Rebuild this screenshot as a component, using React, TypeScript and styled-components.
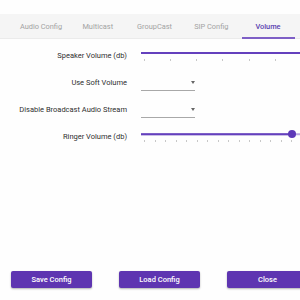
import React from 'react';
import styled, { createGlobalStyle } from 'styled-components';

const Global = createGlobalStyle`
  html, body { margin: 0; padding: 0; overflow: hidden; background: #ffffff; }
  body { font-family: Roboto, "Liberation Sans", sans-serif; }
  * { box-sizing: border-box; }
`;

const Page = styled.div`
  width: 300px;
  height: 300px;
  overflow: hidden;
  display: flex;
  flex-direction: column;
  background: #fefefe;
`;

const TabBar = styled.div`
  flex-shrink: 0;
  width: 320px;
  margin-top: 14px;
  height: 25px;
  background: #f5f5f5;
  border-bottom: 1px solid #ebebeb;
  display: flex;
  align-items: stretch;
  padding-left: 14.5px;
  gap: 3.75px;
`;

const Tab = styled.div<{ $active?: boolean }>`
  position: relative;
  width: 53px;
  flex-shrink: 0;
  display: flex;
  align-items: center;
  justify-content: center;
  font-size: 7.4px;
  white-space: nowrap;
  color: ${p => (p.$active ? '#5b3fb0' : '#a3a3a3')};
  font-weight: ${p => (p.$active ? 500 : 400)};
  &::after {
    content: '';
    display: ${p => (p.$active ? 'block' : 'none')};
    position: absolute;
    left: 0;
    right: 0;
    bottom: -1px;
    height: 2px;
    background: #7e5fc6;
  }
`;

const Form = styled.div`
  width: 320px;
  margin-top: 3px;
  display: grid;
  grid-template-columns: 127px 1fr;
  column-gap: 14px;
  grid-auto-rows: 27px;
`;

const Label = styled.div`
  align-self: center;
  text-align: right;
  font-size: 7.5px;
  color: #2e2e2e;
  white-space: nowrap;
`;

const Slider = styled.div<{ $width: number }>`
  align-self: center;
  width: ${p => p.$width}px;
  display: flex;
  flex-direction: column;
`;

const Track = styled.div<{ $thick: number }>`
  position: relative;
  height: 6px;
  &::before {
    content: '';
    position: absolute;
    left: 0;
    right: 0;
    top: 50%;
    height: ${p => p.$thick}px;
    transform: translateY(-50%);
    background: #b8a6e0;
  }
`;

const Fill = styled.div<{ $thick: number }>`
  position: absolute;
  left: 0;
  top: 50%;
  height: ${p => p.$thick}px;
  transform: translateY(-50%);
  background: #6440bd;
`;

const Thumb = styled.div`
  position: absolute;
  top: 50%;
  width: 8px;
  height: 8px;
  border-radius: 50%;
  background: #5d38b8;
  transform: translate(-50%, -50%);
`;

const Ticks = styled.div<{ $right: number }>`
  display: flex;
  justify-content: space-between;
  padding: 0 ${p => p.$right}px 0 3px;
  margin-top: 3px;
`;

const Tick = styled.span`
  width: 1px;
  height: 2px;
  background: #c8c8c8;
`;

const Select = styled.div`
  align-self: center;
  position: relative;
  width: 54px;
  height: 16px;
  border-bottom: 1px solid #a8a8a8;
  &::after {
    content: '';
    position: absolute;
    right: 0;
    top: 6px;
    border-left: 2.5px solid transparent;
    border-right: 2.5px solid transparent;
    border-top: 3px solid #666666;
  }
`;

const ButtonBar = styled.div`
  margin-top: auto;
  padding: 0 0 12px 11px;
  display: flex;
  gap: 27px;
`;

const Button = styled.button`
  flex-shrink: 0;
  width: 81px;
  height: 17px;
  border: none;
  border-radius: 2px;
  background: #5e35b1;
  color: #ffffff;
  font-family: Roboto, "Liberation Sans", sans-serif;
  font-size: 7.5px;
  font-weight: 500;
  padding: 0;
  box-shadow: 0 1px 2px rgba(0, 0, 0, 0.3);
`;

const tabs = ['Audio Config', 'Multicast', 'GroupCast', 'SIP Config', 'Volume'];

function TickRow({ count, right }: { count: number; right: number }) {
  return (
    <Ticks $right={right}>
      {Array.from({ length: count }).map((_, i) => (
        <Tick key={i} />
      ))}
    </Ticks>
  );
}

export default function App() {
  return (
    <>
      <Global />
      <Page>
        <TabBar>
          {tabs.map(t => (
            <Tab key={t} $active={t === 'Volume'}>
              {t}
            </Tab>
          ))}
        </TabBar>
        <Form>
          <Label>Speaker Volume (db)</Label>
          <Slider $width={164}>
            <Track $thick={2}>
              <Fill $thick={2} style={{ width: '100%' }} />
            </Track>
            <TickRow count={7} right={3} />
          </Slider>

          <Label>Use Soft Volume</Label>
          <Select />

          <Label>Disable Broadcast Audio Stream</Label>
          <Select />

          <Label>Ringer Volume (db)</Label>
          <Slider $width={164}>
            <Track $thick={1.5}>
              <Fill $thick={1.5} style={{ width: '150.5px' }} />
              <Thumb style={{ left: '150.5px' }} />
            </Track>
            <TickRow count={15} right={13} />
          </Slider>
        </Form>
        <ButtonBar>
          <Button>Save Config</Button>
          <Button>Load Config</Button>
          <Button>Close</Button>
        </ButtonBar>
      </Page>
    </>
  );
}
